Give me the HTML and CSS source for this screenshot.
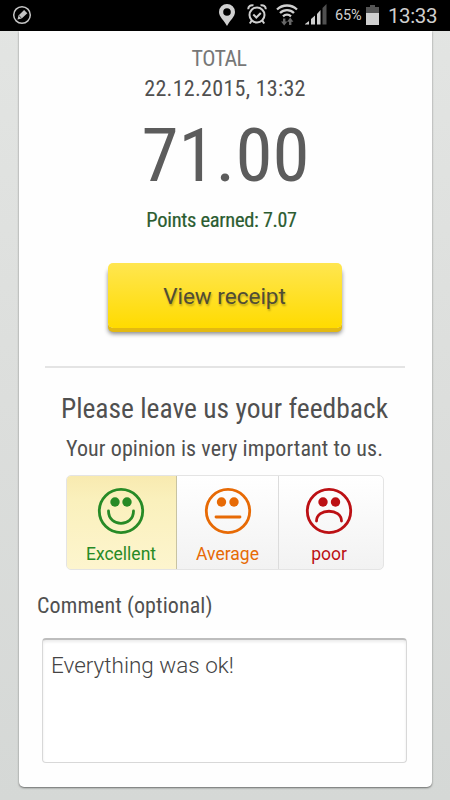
FILE: index.html
```
<!DOCTYPE html>
<html lang="en">
<head>
<meta charset="utf-8">
<title>Receipt feedback</title>
<link rel="stylesheet" href="styles.css">
</head>
<body>
<header class="status">
  <svg class="pen" width="20" height="20" viewBox="0 0 20 20"><circle cx="10" cy="10" r="8.300" fill="none" stroke="#c4c4c4" stroke-width="1.500"/><path d="M5.500 14.500l1-4 5.600-5.500 3.200 3.200-5.600 5.300z" fill="#c4c4c4"/><path d="M6.800 10.500l2.700 2.700" stroke="#000" stroke-width=".7"/></svg>
  <div class="icons">
    <svg class="pin" width="16" height="22" viewBox="0 0 16 22"><path fill="#d0d0d0" fill-rule="evenodd" d="M8 0a8 8 0 0 0-8 8c0 5 5 8 8 14 3-6 8-9 8-14a8 8 0 0 0-8-8zm0 4.200a3.800 3.800 0 1 1 0 7.600 3.800 3.800 0 0 1 0-7.600z"/></svg>
    <svg class="alarm" width="20" height="21" viewBox="0 0 20 21"><g fill="none" stroke="#cfcfcf" stroke-width="2"><circle cx="10" cy="11" r="7.500"/><path d="M1.200 5.200A4 4 0 0 1 6.500 1.400M18.800 5.200a4 4 0 0 0-5.300-3.800M4.800 16.500L2.800 19.500M15.200 16.500l2 3"/><path d="M6.300 10.500l3 3 4.500-4.500"/></g></svg>
    <svg class="wifi" width="22" height="22" viewBox="0 0 22 22"><g fill="none" stroke="#cfcfcf" stroke-width="2.300"><path d="M1 5.500a14.500 14.500 0 0 1 20 0M4 9a10 10 0 0 1 14 0M7 12.300a6 6 0 0 1 8 0"/></g><path fill="#686868" d="M7 14.500h2.400v3h2L8.200 21.500 5 17.500h2zM13 21h2.400v-3.200h2L14.200 13.500 11 17.800h2z"/></svg>
    <svg class="signal" width="22" height="21" viewBox="0 0 22 21"><g fill="#cfcfcf"><path d="M0 20.500V20l4-3v3.500zM6 20.500V15l4-3.500v9zM12 20.500V10l3.500-4v14.500z"/></g><path fill="#505050" d="M17.500 20.500V4L21.500 0v20.500z"/></svg>
    <span class="percent">65%</span>
    <svg class="battery" width="13" height="20" viewBox="0 0 13 20"><path fill="#555" d="M4 0h5v2h4v18H0V2h4z"/><path fill="#cfcfcf" d="M0 8h13v12H0z"/></svg>
    <span class="clock">13:33</span>
  </div>
</header>
<main class="card">
  <p class="total">TOTAL</p>
  <p class="date">22.12.2015, 13:32</p>
  <p class="amount">71.00</p>
  <p class="points">Points earned: <span>7.07</span></p>
  <button class="receipt" type="button">View receipt</button>
  <hr>
  <h1>Please leave us your feedback</h1>
  <p class="opinion">Your opinion is very important to us.</p>
  <div class="ratings">
    <div class="rate excellent">
      <svg width="48" height="48" viewBox="0 0 48 48"><circle cx="24" cy="24" r="21.700"/><g class="eyes"><circle cx="18" cy="15" r="4.700"/><circle cx="30" cy="15" r="4.700"/></g><path d="M11.500 24c0 16.500 25 16.500 25 0"/></svg>
      <span>Excellent</span>
    </div>
    <div class="rate average">
      <svg width="48" height="48" viewBox="0 0 48 48"><circle cx="24" cy="24" r="21.700"/><g class="eyes"><circle cx="17.500" cy="15" r="4.700"/><circle cx="30" cy="15" r="4.700"/></g><path d="M12 30H36"/></svg>
      <span>Average</span>
    </div>
    <div class="rate poor">
      <svg width="48" height="48" viewBox="0 0 48 48"><circle cx="24" cy="24" r="21.700"/><g class="eyes"><circle cx="18" cy="15" r="4.700"/><circle cx="30.500" cy="15" r="4.700"/></g><path d="M11.500 34c0-13 25-13 25 0"/></svg>
      <span>poor</span>
    </div>
  </div>
  <label for="comment">Comment (optional)</label>
  <textarea id="comment">Everything was ok!</textarea>
</main>
</body>
</html>
```
FILE: styles.css
```
* { box-sizing: border-box; }
body {
  margin: 0;
  height: 800px;
  overflow: hidden;
  background: linear-gradient(#e3e5e3, #dcdedc 50%, #d5d8d6);
  font-family: "Roboto Condensed", Roboto, sans-serif;
  font-stretch: 75%;
  color: #505050;
}
p, h1 { margin: 0; font-weight: 400; white-space: nowrap; }
.status {
  height: 31px;
  background: #000;
  color: #cfcfcf;
  display: flex;
  justify-content: space-between;
  align-items: flex-start;
  padding: 0 13px 0 12px;
  font-family: Roboto, sans-serif;
  font-stretch: 100%;
}
.pen { margin-top: 5px; }
.icons { display: flex; align-items: flex-start; }
.icons svg { flex: none; }
.pin { margin: 4px 12px 0 0; }
.alarm { margin: 4px 9px 0 0; }
.wifi { margin: 4px 7px 0 0; }
.signal { margin: 4px 8px 0 0; }
.percent { width: 27px; font-size: 14.500px; line-height: 32px; letter-spacing: -.2px; margin-right: 4px; }
.battery { margin: 5px 9px 0 0; }
.clock { width: 49px; font-size: 20.500px; line-height: 32px; letter-spacing: -.4px; }
.card {
  width: 413px;
  height: 756px;
  margin-left: 19px;
  padding: 13px 19px 0 17px;
  background: #fefefe;
  border-radius: 0 0 5px 5px;
  box-shadow: 0 1px 2px rgba(0, 0, 0, .5);
  display: flex;
  flex-direction: column;
  align-items: center;
}
.total { font-size: 22px; line-height: 30px; letter-spacing: -.6px; color: #777; margin-left: -11px; }
.date { font-size: 22px; line-height: 30px; letter-spacing: .3px; margin-left: 1px; }
.amount { font-size: 75px; line-height: 80px; margin-top: 11px; margin-left: 2px; color: #5c5c5c; }
.points { font-size: 20.500px; line-height: 26px; letter-spacing: -.3px; margin-top: 12px; margin-left: -6px; color: #2b5c30; -webkit-text-stroke: .2px #2b5c30; }
.points span { font-size: 20px; }
.receipt {
  flex: none;
  width: 234px;
  height: 65px;
  margin: 30px 0 0 0;
  padding: 0;
  border: 0;
  border-radius: 5px;
  background: linear-gradient(#ffe650, #ffdb00);
  box-shadow: 0 4px 0 #e3b912, 0 6px 4px rgba(0, 0, 0, .45);
  color: #504d35;
  font: 400 22.500px/64px Roboto, sans-serif;
  text-shadow: 1px 2px 2px rgba(0, 0, 0, .25);
}
hr { flex: none; width: 360px; height: 2px; margin: 38px 0 0; border: 0; background: #e4e4e4; }
h1 { font-size: 27.500px; line-height: 36px; margin-top: 23px; }
.opinion { font-size: 22px; line-height: 30px; letter-spacing: .1px; margin-top: 7px; }
.ratings {
  flex: none;
  display: flex;
  width: 318px;
  height: 95px;
  margin-top: 11px;
  border: 1px solid #e4e4e4;
  border-radius: 5px;
  background: linear-gradient(#fff, #f2f2f2);
  overflow: hidden;
}
.rate { display: flex; flex-direction: column; align-items: center; padding-top: 11px; font: 400 17.500px/22px Roboto, sans-serif; }
.rate svg { flex: none; fill: none; stroke: currentColor; stroke-width: 2.800; stroke-linecap: round; }
.rate .eyes { fill: currentColor; stroke: none; }
.rate span { margin-top: 8px; }
.excellent { width: 110px; color: #278a26; background: linear-gradient(#f8eab0, #faf0bc 25%, #fdf5ce); border-right: 1px solid #c8c3a2; }
.average { width: 102px; padding-left: 1px; color: #e76a05; border-right: 1px solid #dcdcdc; }
.poor { flex: 1; padding-right: 3px; color: #bc1014; }
label { align-self: flex-start; font-size: 22px; line-height: 30px; letter-spacing: .1px; margin: 21px 0 0 1px; }
textarea {
  display: block;
  flex: none;
  width: 365px;
  height: 125px;
  margin-top: 17px;
  padding: 12px 8px;
  border: 1px solid #d8d8d8;
  border-top: 2px solid #bdbdbd;
  border-radius: 4px;
  box-shadow: inset 0 2px 3px rgba(0, 0, 0, .08);
  background: #fff;
  color: #444;
  font: 300 22.500px/26px Roboto, sans-serif;
  resize: none;
  overflow: hidden;
}
```
